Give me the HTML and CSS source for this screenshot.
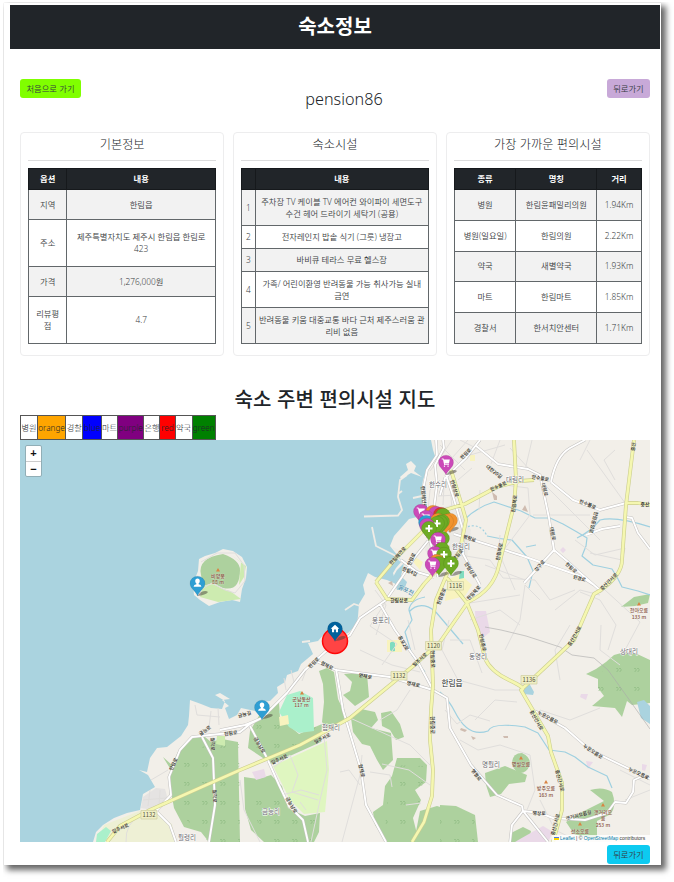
FILE: index.html
```html
<!DOCTYPE html>
<html lang="ko">
<head>
<meta charset="utf-8">
<title>숙소정보</title>
<link rel="stylesheet" href="styles.css">
</head>
<body>
<main class="page">
<header class="banner"><h1>숙소정보</h1></header>
<div class="content">
<div class="toolbar">
<a class="btn btn-home">처음으로 가기</a>
<div class="name">pension86</div>
<a class="btn btn-back">뒤로가기</a>
</div>
<section class="cards">
<article class="card"><h3>기본정보</h3><hr>
<table class="grid basic"><colgroup><col class="b1"><col></colgroup>
<thead><tr><th>옵션</th><th>내용</th></tr></thead>
<tbody>
<tr class="short"><td>지역</td><td>한림읍</td></tr>
<tr class="tall"><td>주소</td><td>제주특별자치도 제주시 한림읍 한림로<br>423</td></tr>
<tr class="short"><td>가격</td><td>1,276,000원</td></tr>
<tr class="tall"><td>리뷰평<br>점</td><td>4.7</td></tr>
</tbody></table></article>
<article class="card"><h3>숙소시설</h3><hr>
<table class="grid facility"><colgroup><col class="f1"><col></colgroup>
<thead><tr><th></th><th>내용</th></tr></thead>
<tbody>
<tr class="tall"><td>1</td><td>주차장 TV 케이블 TV 에어컨 와이파이 세면도구<br>수건 헤어 드라이기 세탁기 (공용)</td></tr>
<tr class="short"><td>2</td><td>전자레인지 밥솥 식기 (그릇) 냉장고</td></tr>
<tr class="short"><td>3</td><td>바비큐 테라스 무료 헬스장</td></tr>
<tr class="tall"><td>4</td><td>가족/ 어린이환영 반려동물 가능 취사가능 실내<br>금연</td></tr>
<tr class="tall"><td>5</td><td>반려동물 키움 대중교통 바다 근처 제주스러움 관<br>리비 없음</td></tr>
</tbody></table></article>
<article class="card"><h3>가장 가까운 편의시설</h3><hr>
<table class="grid nearby"><colgroup><col class="n1"><col class="n2"><col></colgroup>
<thead><tr><th>종류</th><th>명칭</th><th>거리</th></tr></thead>
<tbody>
<tr><td>병원</td><td>한림윤패밀리의원</td><td>1.94Km</td></tr>
<tr><td>병원(일요일)</td><td>한림의원</td><td>2.22Km</td></tr>
<tr><td>약국</td><td>새별약국</td><td>1.93Km</td></tr>
<tr><td>마트</td><td>한림마트</td><td>1.85Km</td></tr>
<tr><td>경찰서</td><td>한서치안센터</td><td>1.71Km</td></tr>
</tbody></table></article>
</section>
<h2>숙소 주변 편의시설 지도</h2>
<div class="legend">
<span class="w17">병원</span><span class="w29 orange">orange</span><span class="w17">경찰</span><span class="w19 blue">blue</span><span class="w16">마트</span><span class="w27 purple">purple</span><span class="w16">은행</span><span class="w15 red">red</span><span class="w17">약국</span><span class="w24 green">green</span>
</div>
<div class="map">
<svg class="tiles" viewBox="20 440 630 402" width="630" height="402">
<defs>
<path id="pin" d="M0 0C-1.6-5-7.5-7.6-7.5-12.6A7.5 7.2 0 0 1 7.5-12.6C7.5-7.6 1.6-5 0 0Z"/>
<path id="shade" d="M0 0L4-4Q9-6 11-4Q9-1 0 0Z"/>
<path id="cart" d="M-4.300-16.500h1.800l.3 1H3.800l-.8 4h-4.200l.2.700h4v.9h-4.800l-1.200-5.600h-1.300Z M-1.600-9.500a.7.7 0 1 0 .1 0M2-9.500a.7.7 0 1 0 .1 0"/>
<path id="plus" d="M-1-16H1v2.500H3.500v2H1V-9H-1v-2.500h-2.500v-2H-1Z"/>
<path id="person" d="M-2.300-14.700Q-2.300-17.400 0-17.400T2.300-14.700Q2-13 1.100-12.400V-11.700Q3.700-11.300 3.900-9.200H-3.900Q-3.700-11.300-1.100-11.700V-12.400Q-2-13-2.300-14.700Z"/>
<path id="house" d="M0-16.800L4.300-12.700H3V-9.300H.9V-12H-.9V-9.300H-3V-12.700H-4.300Z"/>
<pattern id="trees" width="18" height="19" patternUnits="userSpaceOnUse"><path class="tree" d="M4 4q1-2 2 0t-1 2v1M7 4q1-2 2 0t-1 2v1"/></pattern>
<path id="major" d="M412 842 424 822 432 796 433 770 430 740 431 710 433 685 431 630 436 600 447 574 460 550 466 520 462 506 451 470M514 440 516 480 514 505 499 565Q494 590 468 602L440 642 412 667 350 718 300 745 240 770 150 810 120 826 107 842M376 582 387 599 412 600 424 584 435 572 448 545M376 582 397 557 424 530M634 440 626 505 622 560Q622 575 601 590L594 594 574 640 555 658 523 688M438 512 465 504 497 487 520 481 534 480M626 503 638 503 650 505M447 578 467 603 478 630 485 658Q490 671 509 680T521 690L548 736 551 752 562 783 562 810 553 842"/>
<path id="local" d="M436 440 437 455 427 470 423 490 424 512M443 440 444 448 435 465 437 484 434 508M440 495 445 478 466 458 480 440M446 475 453 496 463 530 463 554 480 585M454 534 520 555 580 576 594 585M475 445 498 464 528 469 540 475 549 518 554 550 524 583M551 482 573 500 600 510 626 503M551 482Q556 456 570 448L585 440M554 550 567 561 578 571 594 585 602 592M401 560 417 572 434 577M428 541 415 557 402 577 386 600 360 618 350 635 325 652 305 670 287 693 262 718 245 725 220 730M262 718 250 724 240 732 210 735 192 737 180 750 169 777 171 795 156 811 170 825 176 842M202 737 213 758 215 805 209 842M250 726 267 758 279 785 289 806 303 820 308 842M336 669 343 710 361 770 366 805 386 842M318 662 336 670 390 677 433 690 447 698 450 728 471 765 497 795 522 806 523 811 548 842M523 811 512 825 510 842M523 811 540 813 553 818 585 820 607 813 615 802 626 803 633 792 634 780 645 775M380 604 395 630 418 662 433 690M535 711 565 728 590 750 650 779M586 535 602 529 620 526M626 517 632 518 638 533 650 549M424 530 430 540 438 577"/>
</defs>
<rect class="sea" x="20" y="440" width="630" height="402"/>
<path class="land" d="M650 440H431L433 450 436 459 428 466 423 480 421 492 423 506 417 517 409 519 394 536 390 546 402 561 396 568 393 573 396 584 387 580 375 577 368 573 363 585 365 594 359 604 358 616 357 624 348 633 337 637 326 632 318 641 308 643 313 654 301 664 298 671 287 675 285 682 277 687 278 693 270 701 262 702 255 711 241 708 237 715 229 719 225 708 229 706 222 700 230 699 220 693 215 695 225 701 222 709 211 708 201 704 190 700 189 716 188 725 181 736 167 747 157 748 150 758 147 772 139 770 148 775 155 787 143 794 140 810 127 813 114 818 103 825 96 832 93 842H650Z"/>
<path class="land" d="M199 559L205 556 215 553 223 549 233 551 242 557 247 567 246 578 242 589 240 602 232 600 220 602 209 606 200 600 194 595 193 584 198 571Z"/>
<path class="pier" d="M364 516.500 398 515.500 402 510 398 497 400 480 407 475M402 491 398 494M372 527 376 546 394 555 402 562M393 548 404 553M413 498 422 496M345 610 354 604 360 606M302 642 310 641"/>
<path class="land" d="M406 464L411 461 416 466 414 471 422 477 411 473 406 476 401 479 400 477 408 470Z"/>
<g class="farmland"><path d="M104 825L142 810 155 812 160 842H112L98 840Z"/><path d="M152 811L172 824 176 842H160Z"/></g>
<path class="park" d="M273 766L327 741 329 770 325 812 304 814 290 800Z"/>
<path class="wood" d="M201 575Q197 558 223 554 240 560 240 570 240 592 223 588L213 583 203 586Z"/>
<g class="wood">
<path d="M163 757L172 765 178 752 194 737 205 737 211 742 222 739 238 742 240 842H209L201 832 184 827 174 808 170 786 171 770Z"/>
<path d="M260 714L279 702 280 718 299 734 322 724 321 742 272 764 248 748 250 731Z"/>
<path d="M319 671L327 668 334 672 338 699 347 718 343 722 328 730 322 722 324 702 323 684Z"/>
<path d="M344 674L352 682 350 691 343 695 355 706 369 697 367 674 355 673Z"/>
<path d="M351 718L361 709 375 712 378 720 371 728 391 733 393 760 383 770 377 760 370 746 362 744 353 732Z"/>
<path d="M381 713L391 711 400 724 404 737 396 740 390 730 382 726Z"/>
<path d="M397 758L420 758 427 765 426 782 415 790 421 800 413 818 419 842H387L375 825 373 812 383 805 385 786 392 776Z"/>
<path d="M420 811L437 806 450 810V842H414Z"/>
<path d="M244 777L258 779 271 775 282 786 288 808 305 816 320 813 319 832 314 842H264L251 830 245 809Z"/>
<path d="M440 805L456 806 475 815 478 842H440Z"/>
<path d="M586 674L596 669 606 662 614 655 625 652 635 653 650 660V703L632 705 627 701 622 717 615 708 592 706 604 696 598 688 598 679Z"/>
<path d="M512 762Q513 753 522 753 531 757 530 765 526 774 519 773 512 769 512 762Z"/>
<path d="M485 773L505 766 527 775 525 782 509 784 501 794 490 797 486 785Z"/>
<path d="M590 790Q603 786 612 792 617 805 611 814L597 821 597 840 574 834 566 822 582 812 604 801Z"/>
<path d="M511 833L523 827 531 831 529 842H509Z"/><path d="M621 607L634 597 650 594 648 603 635 606Z"/>
</g>
<g class="treefill">
<path d="M176 750L239 742 240 842H209L174 808Z M260 714L299 734 322 724 272 764 250 748Z M390 765L425 766 415 835 385 830Z M244 780L315 820 312 842H264Z M440 808L475 815V842H440Z M590 675L648 660 640 700 595 704Z"/></g>
<path class="pitch" d="M287 695L300 691 313 698 314 731 299 733 289 727 279 712Z M97 834L106 827 111 831 105 842H96Z"/>
<g class="meadow"><path d="M203 586L213 584 223 589 230 591 241 599 218 602 200 597Z"/><path d="M217 736L225 736 225 746 216 744Z"/><path d="M231 555L241 562 239 585 244 577 246 566Z"/></g>
<g class="pale"><path d="M412 555L423 562 420 570 414 563Z"/><path d="M447 580L460 574 472 585 465 596 445 601Z"/><path d="M470 455h5v6h-5Z"/><path d="M279 717L288 715 289 724 280 726Z"/><path d="M387 640h15v12h-15Z"/></g>
<path class="town" d="M143 797L156 788 165 789 168 800 158 811 141 808Z"/>
<path class="town pale-town" d="M433 510L455 504 471 530 465 570 440 578 425 550Z"/>
<g class="lilac"><path d="M475 611L486 611 490 632 484 637 476 629Z"/><path d="M252 772L264 769 266 777 256 780Z"/><path d="M520 839L543 826 553 832 548 842H515Z"/><path d="M586 761l7 1-5 7Z M581 694h7l-2 6-6-3ZM563 547l3 3-3 3-3-3ZM642 764l5 1-2 6-3-1Z"/></g>
<path class="school" d="M460 571L464 571 464 578 459 579Z M390 643q1-2 5-1v9q-4 1-5-1Z"/>
<path class="lake" d="M524 689L529 683 534 692 533 695 524 694Z M637 702L644 700 650 706V724L641 718Z M404 563L397 570 393 577 397 590 404 590 407 582 401 576Z"/>
<path class="brown" d="M492 492l5 4v4h-3Z M525 505l3 7-6-2ZM461 728l6 2-2 2-5-2ZM471 736l5 2-3 2ZM388 583l4-2 1 5Z M503 736h5v2h-4Z"/>
<path class="river" d="M464 520Q477 507 494 502L503 505 521 511 535 518 550 518 563 524 577 532 587 538 586 546 582 556 593 565 612 569 618 579 622 587 638 591 650 595M577 538Q590 532 600 520 616 516 650 527M487 536Q500 539 512 540L527 557 533 571 529 588M526 547 536 545M425 597Q410 600 409 610L412 620 405 632 412 655 425 672M409 612Q420 600 435 611L463 644M440 692Q449 700 455 712 468 738 488 731 492 722 525 727L538 733 549 750 565 752 575 757 588 767 607 776 612 788"/>
<path class="river dotted" d="M464 528Q480 521 487 536"/>
<g class="minor">
<path d="M430 471L442 455 452 440M440 445 465 470M452 458 468 440M458 480 472 468M460 440 480 450M470 455 505 445M500 440 491 464M510 448 530 470 600 540M505 485 528 488 530 515 500 555 515 590M532 440 525 470M587 450 625 503M533 515 590 515M540 600 525 585 520 620 505 650M590 440 580 460M575 540 595 555 625 548 622 560 590 553M605 590 640 622 625 650M580 592 600 600 616 625 608 650M555 610 580 590 600 595M460 555 490 560 503 578 535 580 550 600 575 590M470 603 520 595M449 620 442 650 458 680 495 690 520 690M450 640 470 640 482 673M385 603 370 626 397 644 382 665M375 590 386 605 376 635M408 620 415 650M360 650 392 665 420 672M410 690 397 710 380 720M445 710 457 724 470 715 490 721M460 740 478 750 500 745 530 755 535 790 525 815M475 720 495 700 517 702M540 710 570 720 600 708M560 680 555 650 570 625M620 665 600 650 601 625M540 800 555 830 580 842M625 800 650 790M620 770 650 785"/>
<path d="M324 736L327 770 320 800 311 842M362 755 360 775 342 842M274 767 290 755 298 775 292 792 318 800M282 795 301 790 319 795M300 802 306 810M350 718 410 745 430 765M382 764 409 770 430 785M406 805 421 803M370 772 390 775 392 787M195 705 197 715 220 717M211 711 209 727M218 708 219 725M151 780 168 770M126 842Q125 823 141 815M240 780 244 810 260 842M284 678 286 690M291 670 294 682M307 668 302 681M340 772 349 770 360 785M150 790 148 806M160 790 159 806M143 800 166 798M470 620 500 610 520 625M485 565 525 580M500 535 498 558M479 510 480 490M615 480 604 460 615 450M440 480 430 490 428 510M438 496 458 495M444 485 443 505M450 484 452 510M200 590 212 583 225 590 235 593 245 581 244 565 235 553 217 553 201 562"/></g>
<path class="rail" d="M485 627L501 630 526 636 560 647 572 655 594 658 608 670 618 684 628 698 650 729"/>
<use href="#local" class="roadedge"/><use href="#local" class="roadfill"/>
<use href="#major" class="casing"/><use href="#major" class="yellow"/>
<g class="shields"><path d="M447.500 581.500h16v8.500h-16ZM425.500 641.500h16v8.500h-16ZM391 671.500h16v8.500h-16ZM521 675.500h16v8.500h-16ZM141 810.500h16v8.500h-16Z"/><text x="455.500" y="588">1116</text><text x="433.500" y="648">1120</text><text x="399" y="678">1132</text><text x="529" y="682">1136</text><text x="149" y="817">1132</text></g>
<g class="place"><text x="438" y="487">한수리</text><text x="515" y="482">대림리</text><text x="461" y="549">한림리</text><text x="381" y="623">옹포리</text><text x="478" y="659">동명리</text><text x="629" y="654">상대리</text><text x="331" y="730">협재리</text><text x="491" y="767">명월리</text><text x="271" y="814">금능리</text><text x="187" y="840">월령리</text><text class="town-name" x="452" y="685.500">한림읍</text></g>
<g class="peak"><path d="M218 568l2 3.500h-4ZM302 691l2 3.500h-4ZM639 602l2 3.500h-4ZM521 756l2 3.500h-4ZM546 780l2 3.500h-4ZM603 803l2 3.500h-4ZM580 822l2 3.500h-4Z"/><text x="218" y="577.500">비양봉</text><text x="218" y="584">88 m</text><text x="301.500" y="700.500">군남동산</text><text x="301.500" y="707">117 m</text><text x="639" y="612">천아오름</text><text x="639" y="618.500">133 m</text><text x="521" y="766">명월오름</text><text x="546" y="790">방주오름</text><text x="546" y="796.500">163 m</text><text x="603" y="813.500">갯거리오</text><text x="603" y="820">름</text><text x="603" y="826.500">253 m</text><text x="580" y="833">선소오름</text></g>
<g class="street">
<text transform="translate(422 497)rotate(85)">한림해안로</text><text transform="translate(453 489)rotate(72)">한림상로</text><text transform="translate(467 455)rotate(-45)">한림로</text><text transform="translate(493 473)rotate(38)">대한20길</text><text transform="translate(499 488)rotate(-24)">한수풀로</text><text transform="translate(540 480)rotate(10)">한수풀로</text><text transform="translate(543 490)rotate(75)">대림로</text><text transform="translate(551 534)rotate(80)">대림로</text><text transform="translate(587 506)rotate(22)">한수풀로</text><text transform="translate(592 522)rotate(105)">한림중앙로</text><text transform="translate(516 504)rotate(-82)">한림북로</text><text transform="translate(501 552)rotate(-78)">한림북로</text><text transform="translate(475 594)rotate(-48)">한림북로</text><text transform="translate(635 447)rotate(-82)">중산</text><text transform="translate(645 506)">중산</text><text transform="translate(469 540)rotate(18)">명랑로</text><text transform="translate(459 556)rotate(-48)">한림로</text><text transform="translate(469 571)rotate(57)">한림상로</text><text transform="translate(541 567)rotate(-50)">강구로</text><text transform="translate(570 569)rotate(42)">한림로</text><text transform="translate(579 580)rotate(16)">한경로</text><text transform="translate(610 583)rotate(-45)">중산간서로</text><text transform="translate(576 637)rotate(-60)">중산간서로</text><text transform="translate(399 557)rotate(-48)">한림해안로</text><text transform="translate(413 560)rotate(-65)">한림로</text><text transform="translate(409 573)rotate(25)">한림4길</text><text transform="translate(399 602)">한림상로</text><text class="water-name" transform="translate(405 592)rotate(25)">옹포천</text><text transform="translate(443 597)rotate(-68)">한림중로</text><text transform="translate(402 644)rotate(60)">옹포2로</text><text transform="translate(481 643)rotate(78)">한림중로</text><text transform="translate(421 661)rotate(-42)">일주서로</text><text transform="translate(431 659)rotate(88)">한림중로</text><text transform="translate(431 725)rotate(90)">한림중로</text><text transform="translate(315 664)rotate(-45)">한림로</text><text transform="translate(326 667)rotate(28)">협재로</text><text transform="translate(365 678)rotate(10)">명재로</text><text transform="translate(413 686)rotate(12)">명재로</text><text transform="translate(245 716)rotate(-15)">금능길</text><text transform="translate(231 735)rotate(-8)">한림로</text><text transform="translate(206 732)rotate(-35)">금능로</text><text transform="translate(258 746)rotate(60)">금능남로</text><text transform="translate(280 761)rotate(-24)">일주서로</text><text transform="translate(323 740)rotate(-27)">일주서로</text><text transform="translate(360 771)rotate(78)">협재로</text><text transform="translate(175 765)rotate(-65)">한림로</text><text transform="translate(211 744)rotate(88)">월각로</text><text transform="translate(213 796)rotate(88)">월각로</text><text transform="translate(290 806)rotate(60)">금능남로</text><text transform="translate(121 830)rotate(-24)">일주서로</text><text transform="translate(535 721)rotate(60)">중산간서로</text><text transform="translate(558 781)rotate(75)">중산간서로</text><text transform="translate(557 825)rotate(-75)">중산간서로</text><text transform="translate(547 719)rotate(28)">누운오름로</text><text transform="translate(592 753)rotate(34)">누운오름로</text><text transform="translate(638 775)rotate(25)">누운오름로</text><text transform="translate(475 776)rotate(52)">명월로</text><text transform="translate(539 815)rotate(2)">명상로</text><text transform="translate(579 817)rotate(-15)">갯거리오름길</text></g>
<circle class="home-area" cx="335" cy="641" r="12.500"/>
<g class="shadows"><use href="#shade" x="197" y="596"/><use href="#shade" x="262" y="719"/><use href="#shade" x="335" y="641"/><use href="#shade" x="446" y="475"/><use href="#shade" x="448" y="532"/><use href="#shade" x="438" y="577"/><use href="#shade" x="451" y="576"/></g>
<g class="pins">
<use href="#pin" class="p" x="446" y="475"/><use href="#cart" class="glyph" x="446" y="475"/>
<use href="#pin" class="p" x="421" y="524"/><use href="#cart" class="glyph" x="421" y="524"/>
<use href="#pin" class="o" x="433" y="525"/><use href="#pin" class="p" x="436" y="526"/><use href="#pin" class="r" x="441" y="527"/><use href="#pin" class="g" x="443" y="528"/>
<use href="#pin" class="p" x="426" y="530"/><use href="#cart" class="glyph" x="426" y="530"/><use href="#pin" class="b" x="426" y="535"/>
<use href="#pin" class="o" x="438" y="533"/><use href="#pin" class="o" x="450" y="533"/><use href="#pin" class="o" x="446" y="534"/><use href="#pin" class="g" x="442" y="534"/><use href="#pin" class="g" x="440" y="535"/><use href="#pin" class="g" x="437" y="536"/><use href="#plus" class="glyph" x="437" y="536"/>
<use href="#pin" class="p" x="427" y="538"/><use href="#pin" class="g" x="429" y="541"/><use href="#plus" class="glyph" x="429" y="541"/>
<use href="#pin" class="g" x="442" y="551"/><use href="#pin" class="p" x="438" y="552"/><use href="#cart" class="glyph" x="438" y="552"/>
<use href="#pin" class="g" x="442" y="562"/><use href="#pin" class="p" x="435" y="566"/><use href="#cart" class="glyph" x="435" y="566"/><use href="#pin" class="g" x="444" y="567"/><use href="#plus" class="glyph" x="444" y="567"/>
<use href="#pin" class="o" x="437" y="574"/><use href="#pin" class="g" x="439" y="576"/><use href="#pin" class="p" x="432.500" y="577"/><use href="#cart" class="glyph" x="432.500" y="577"/><use href="#pin" class="g" x="451" y="576"/><use href="#plus" class="glyph" x="451" y="576"/>
<use href="#pin" class="b" x="197.500" y="596"/><use href="#person" class="glyph" x="197.500" y="596"/>
<use href="#pin" class="b" x="262" y="720"/><use href="#person" class="glyph" x="262" y="720"/>
<use href="#pin" class="n" x="335" y="641.500"/><use href="#house" class="glyph" x="335" y="641.500"/>
</g>
</svg>
<div class="zoomctl"><span>+</span><span>−</span></div>
<div class="credit"><i class="flag"></i><a>Leaflet</a> | © <a>OpenStreetMap</a> contributors</div>
</div>
<div class="footer"><a class="btn btn-info">뒤로가기</a></div>
</div>
</main>
</body>
</html>
```
FILE: styles.css
```css
* { box-sizing: border-box; }
body { margin: 0; padding: 3px 0 0 4px; height: 882px; background: #fff; font-family: "Noto Sans", "Noto Sans CJK KR", sans-serif; color: #212529; font-size: 8.3px; }
.page { width: 657px; height: 862px; background: #fff; box-shadow: 4px 4px 6px 1px rgba(0,0,0,.6), 0 0 1px rgba(0,0,0,.12); padding: 2px 1px 0 6px; clip-path: inset(-1px -13px -17px -1px); }
.banner { height: 44px; background: #212529; color: #fff; display: flex; align-items: center; justify-content: center; }
h1, h2, h3 { margin: 0; font-family: "Noto Sans CJK KR", sans-serif; }
h1 { font-size: 20px; line-height: 42px; height: 44px; font-weight: 700; }
.content { padding: 30px 10px 0; }
.toolbar { display: flex; justify-content: space-between; align-items: flex-start; height: 53px; }
.btn { display: block; height: 19px; line-height: 18px; border-radius: 3px; text-align: center; font-family: "Noto Sans CJK KR", sans-serif; font-size: 8.3px; font-weight: 350; color: #343a3f; }
.btn-home { width: 61px; background: #80ff00; }
.btn-back { width: 43px; background: #c8a9d8; }
.btn-info { width: 43px; background: #0dcaf0; }
.name { font-size: 16.2px; line-height: 20px; margin-top: 10px; font-weight: 300; }
.cards { display: grid; grid-template-columns: repeat(3, minmax(0, 1fr)); gap: 8.5px; }
.card { height: 224px; border: 1px solid #ededee; border-radius: 4px; padding: 0 7.2px; }
h3 { font-size: 12.2px; line-height: 22px; height: 27px; font-weight: 300; text-align: center; }
hr { margin: 0 0 7px; border: 0; height: 1px; background: #dcdcdd; }
.grid { border-collapse: collapse; table-layout: fixed; width: 188px; height: 176px; text-align: center; font-weight: 350; line-height: 12px; }
.grid th { background: #212529; color: #fff; height: 21px; padding: 0; font-weight: 700; border: 1px solid #16191c; }
.grid td { padding: 0; border: 1px solid #62676a; white-space: nowrap; color: #3a3e42; }
.grid tbody tr:nth-child(odd) { background: #f2f2f2; }
.b1 { width: 38px; }
.f1 { width: 13.5px; }
.n1 { width: 61.5px; }
.n2 { width: 81px; }
.basic .short { height: 30px; }
.basic .tall { height: 47px; }
.facility .short { height: 23px; }
.facility .tall { height: 36px; }
.nearby tbody tr { height: 30.8px; }
h2 { margin-top: 29px; height: 30px; font-size: 20px; line-height: 28px; font-weight: 500; text-align: center; }
.legend { display: flex; width: 196px; height: 25px; border: 1px solid #555; }
.legend span { border-right: 1px solid #555; line-height: 23px; font-weight: 300; white-space: nowrap; display: flex; justify-content: center; flex: 1 1 0; min-width: 0; font-size: 8.2px; }
.legend span:last-child { border-right: 0; }
.legend .w15 { flex-grow: 15; }
.legend .w16 { flex-grow: 16; }
.legend .w17 { flex-grow: 17; }
.legend .w19 { flex-grow: 19; }
.legend .w24 { flex-grow: 24; }
.legend .w27 { flex-grow: 27; }
.legend .w29 { flex-grow: 29; }
.orange { background: orange; }
.blue { background: blue; }
.purple { background: purple; }
.red { background: red; }
.green { background: green; }
.map { position: relative; height: 402px; overflow: hidden; }
.tiles { display: block; }
.sea, .lake { fill: #aad3df; }
.land { fill: #f2efe9; }
.pier { fill: none; stroke: #efece6; stroke-width: 1.8; }
.farmland { fill: #eef0d5; }
.park { fill: #dff6c0; }
.pitch { fill: #aaf0cb; }
.wood { fill: #add19e; }
.treefill { fill: url(#trees); }
.tree { fill: none; stroke: #8ab97e; stroke-width: .6; }
.meadow { fill: #cdebb0; }
.pale { fill: #f8f3bf; }
.town { fill: #e0dfdf; opacity: .75; }
.pale-town { opacity: .35; }
.lilac { fill: #ead9e8; }
.school { fill: #80dcc0; }
.brown { fill: #cfbcb0; }
.river { fill: none; stroke: #9fd0e0; stroke-width: 1.2; stroke-linejoin: round; }
.dotted { stroke-dasharray: 2 2; }
.minor { fill: none; stroke: #e0dedc; stroke-width: 1; stroke-linejoin: round; }
.rail { fill: none; stroke: #aaa; stroke-width: .6; }
.casing { fill: none; stroke: #cbcd8f; stroke-width: 3.8; stroke-linejoin: round; }
.yellow { fill: none; stroke: #f5f7b0; stroke-width: 2.6; stroke-linejoin: round; }
.roadedge { fill: none; stroke-linejoin: round; stroke: #c4c2c0; stroke-width: 2.9; }
.roadfill { fill: none; stroke-linejoin: round; stroke: #fff; stroke-width: 1.9; }
.shields path { fill: #f0efc5; stroke: #cfcea1; stroke-width: .7; }
.tiles text { text-anchor: middle; font-family: "Noto Sans CJK KR", sans-serif; paint-order: stroke; stroke-linejoin: round; }
.shields text { font-size: 5.8px; fill: #55553c; }
.place text { font-size: 6.5px; fill: #66666b; stroke: #fff; stroke-width: 1px; }
.place .town-name { font-size: 7.7px; fill: #222; }
.peak path { fill: #d98242; }
.peak text { font-size: 5px; font-weight: 500; fill: #87513c; stroke: rgba(255,255,255,.5); stroke-width: .5px; }
.street text { font-size: 4.8px; font-weight: 500; fill: #222; stroke: rgba(246,243,223,.6); stroke-width: .5px; }
.street .water-name { fill: #4f91b8; font-size: 6px; }
.home-area { fill: #ff4444; stroke: #ff0808; stroke-width: 1.5; }
.shadows { fill: #454038; opacity: .5; }
.pins use { stroke: rgba(0,0,0,.2); stroke-width: .4; }
.pins .p { fill: #cb4ab8; }
.pins .b { fill: #2e9ed3; }
.pins .g { fill: #6dab24; }
.pins .o { fill: #f0922e; }
.pins .r { fill: #d33d2a; }
.pins .n { fill: #00629d; }
.pins .glyph { fill: #fff; stroke: none; }
.zoomctl { position: absolute; top: 5px; left: 5px; width: 17px; height: 32px; border: 1px solid #91aeb6; border-radius: 2px; background: #fff; }
.zoomctl span { display: block; height: 15px; text-align: center; font: 700 11px/15px "Liberation Sans", sans-serif; color: #111; }
.zoomctl span + span { border-top: 1px solid #ccc; }
.credit { position: absolute; right: 0; bottom: 0; width: 98px; height: 7px; background: rgba(255,255,255,.8); font: 4.9px/7px "Liberation Sans", sans-serif; color: #333; white-space: nowrap; padding-left: 2px; }
.credit a { color: #0078a8; }
.flag { display: inline-block; width: 5px; height: 3px; margin-right: 1px; background: linear-gradient(#4c7be1 50%, #ffd500 50%); }
.footer { display: flex; justify-content: flex-end; padding-top: 3px; }
```
